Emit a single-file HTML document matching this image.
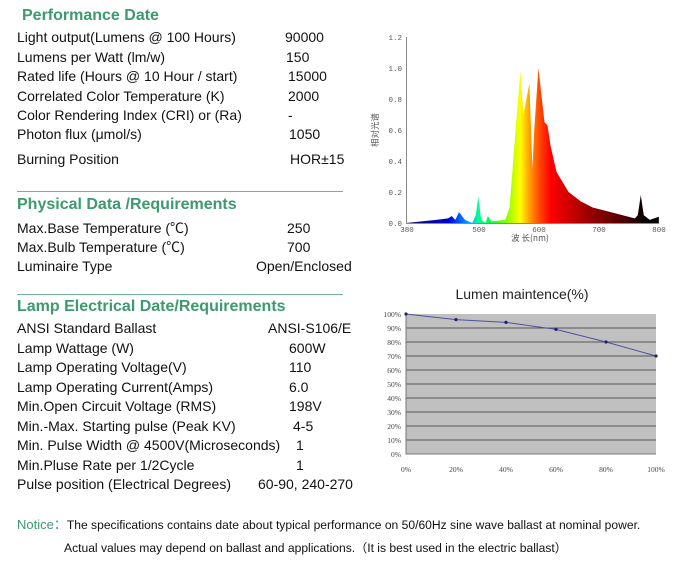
<!DOCTYPE html>
<html><head><meta charset="utf-8"><style>
body{margin:0;width:676px;height:562px;background:#fff;position:relative;overflow:hidden;font-family:"Liberation Sans","Noto Sans CJK SC",sans-serif;color:#111}
.t{position:absolute;font-size:14px;white-space:nowrap;line-height:16px}
.h{position:absolute;font-size:16px;font-weight:bold;color:#3c9a6e;white-space:nowrap;line-height:18px}
.ln{position:absolute;left:17px;width:326px;height:1px;background:#6fb594}
.n{position:absolute;font-size:12.1px;white-space:nowrap;line-height:14px}
</style></head><body>
<div class="h" style="left:22px;top:7px">Performance Date</div>
<div class="t" style="left:17px;top:29px">Light output(Lumens @ 100 Hours)</div><div class="t" style="left:285px;top:29px">90000</div>
<div class="t" style="left:17px;top:49px">Lumens per Watt (lm/w)</div><div class="t" style="left:286px;top:49px">150</div>
<div class="t" style="left:17px;top:68px">Rated life (Hours @ 10 Hour / start)</div><div class="t" style="left:288px;top:68px">15000</div>
<div class="t" style="left:17px;top:88px">Correlated Color Temperature (K)</div><div class="t" style="left:288px;top:88px">2000</div>
<div class="t" style="left:17px;top:107px">Color Rendering Index (CRI) or (Ra)</div><div class="t" style="left:288px;top:107px">-</div>
<div class="t" style="left:17px;top:126px">Photon flux (μmol/s)</div><div class="t" style="left:289px;top:126px">1050</div>
<div class="t" style="left:17px;top:151px">Burning Position</div><div class="t" style="left:290px;top:151px">HOR±15</div>
<div class="ln" style="top:191px"></div>
<div class="h" style="left:17px;top:196px">Physical Data /Requirements</div>
<div class="t" style="left:17px;top:220px">Max.Base Temperature (℃)</div><div class="t" style="left:287px;top:220px">250</div>
<div class="t" style="left:17px;top:239px">Max.Bulb Temperature (℃)</div><div class="t" style="left:287px;top:239px">700</div>
<div class="t" style="left:17px;top:258px">Luminaire Type</div><div class="t" style="left:256px;top:258px">Open/Enclosed</div>
<div class="ln" style="top:294px"></div>
<div class="h" style="left:17px;top:298px">Lamp Electrical Date/Requirements</div>
<div class="t" style="left:17px;top:320px">ANSI Standard Ballast</div><div class="t" style="left:268px;top:320px">ANSI-S106/E</div>
<div class="t" style="left:17px;top:340px">Lamp Wattage (W)</div><div class="t" style="left:289px;top:340px">600W</div>
<div class="t" style="left:17px;top:359px">Lamp Operating Voltage(V)</div><div class="t" style="left:289px;top:359px">110</div>
<div class="t" style="left:17px;top:379px">Lamp Operating Current(Amps)</div><div class="t" style="left:289px;top:379px">6.0</div>
<div class="t" style="left:17px;top:398px">Min.Open Circuit Voltage (RMS)</div><div class="t" style="left:289px;top:398px">198V</div>
<div class="t" style="left:17px;top:418px">Min.-Max. Starting pulse (Peak KV)</div><div class="t" style="left:293px;top:418px">4-5</div>
<div class="t" style="left:17px;top:437px">Min. Pulse Width @ 4500V(Microseconds)</div><div class="t" style="left:296px;top:437px">1</div>
<div class="t" style="left:17px;top:457px">Min.Pluse Rate per 1/2Cycle</div><div class="t" style="left:296px;top:457px">1</div>
<div class="t" style="left:17px;top:476px">Pulse position (Electrical Degrees)</div><div class="t" style="left:258px;top:476px">60-90, 240-270</div>
<div class="n" style="left:17px;top:518px"><span style="color:#3c9a6e;font-size:13px">Notice：</span>The specifications contains date about typical performance on 50/60Hz sine wave ballast at nominal power.</div>
<div class="n" style="left:64px;top:541px">Actual values may depend on ballast and applications.（It is best used in the electric ballast）</div>

<svg style="position:absolute;left:0;top:0" width="676" height="562">
<defs><linearGradient id="sp" gradientUnits="userSpaceOnUse" x1="380" y1="0" x2="800" y2="0">
<stop offset="0" stop-color="#101060"/><stop offset="0.167" stop-color="#0000d0"/><stop offset="0.214" stop-color="#0060ff"/><stop offset="0.262" stop-color="#00c0ff"/><stop offset="0.286" stop-color="#00ff90"/><stop offset="0.333" stop-color="#00ff40"/><stop offset="0.393" stop-color="#80ff00"/><stop offset="0.452" stop-color="#ffff00"/><stop offset="0.488" stop-color="#ffa000"/><stop offset="0.524" stop-color="#ff5000"/><stop offset="0.571" stop-color="#ff0000"/><stop offset="0.714" stop-color="#a00000"/><stop offset="0.857" stop-color="#500000"/><stop offset="0.952" stop-color="#000"/><stop offset="1" stop-color="#000"/></linearGradient></defs>
<g transform="translate(406,223) scale(0.602,-155) translate(-380,0)">
<path fill="url(#sp)" d="M380 0 L430 0.02 L450 0.03 L456 0.045 L462 0.02 L468 0.07 L478 0.02 L490 0 L496 0.05 L500 0.17 L505 0.02 L512 0 L516 0.045 L522 0.01 L545 0.02 L552 0.1 L560 0.5 L570 0.98 L575 0.7 L585 0.9 L590 0.35 L593 0.6 L600 1.0 L610 0.65 L615 0.63 L620 0.5 L630 0.33 L650 0.2 L670 0.14 L690 0.1 L720 0.07 L760 0.03 L765 0.05 L770 0.18 L775 0.05 L785 0.02 L800 0.04 L800 0 Z"/>
</g>
<g stroke="#888" stroke-width="1" fill="none"><path d="M406.5 37V223.5H659"/></g>
<g font-family="Liberation Mono,monospace" font-size="7.5" fill="#555" text-anchor="end">
<text x="402" y="40">1.2</text><text x="402" y="71">1.0</text><text x="402" y="102">0.8</text><text x="402" y="133">0.6</text><text x="402" y="164">0.4</text><text x="402" y="195">0.2</text><text x="402" y="226">0.0</text></g>
<g font-family="Liberation Mono,monospace" font-size="7.5" fill="#555" text-anchor="middle">
<text x="407" y="232">380</text><text x="479" y="232">500</text><text x="539" y="232">600</text><text x="599" y="232">700</text><text x="659" y="232">800</text>
<text x="530" y="241" font-family="Noto Sans CJK SC,sans-serif" font-size="8.5">波 长(nm)</text></g>
<text transform="translate(378,130) rotate(-90)" text-anchor="middle" font-family="Noto Sans CJK SC,sans-serif" font-size="8.5" fill="#555">相对光谱</text>

<text x="522" y="299" text-anchor="middle" font-size="14" fill="#222" font-family="Liberation Sans,sans-serif">Lumen maintence(%)</text>
<rect x="406" y="314" width="250" height="140" fill="#c0c0c0"/>
<g stroke="#333" stroke-width="0.8">
<path d="M406 328H656M406 342H656M406 356H656M406 370H656M406 384H656M406 398H656M406 412H656M406 426H656M406 440H656"/></g>
<path d="M406 314V454H656" stroke="#777" fill="none"/>
<polyline points="406,314 456,319.6 506,322.4 556,329.4 606,342 656,356" fill="none" stroke="#5050a0" stroke-width="1"/>
<g fill="#202070"><circle cx="406" cy="314" r="1.6"/><circle cx="456" cy="319.6" r="1.6"/><circle cx="506" cy="322.4" r="1.6"/><circle cx="556" cy="329.4" r="1.6"/><circle cx="606" cy="342" r="1.6"/><circle cx="656" cy="356" r="1.6"/></g>
<g font-family="Liberation Serif,serif" font-size="7.5" fill="#444" text-anchor="end">
<text x="401" y="317">100%</text><text x="401" y="331">90%</text><text x="401" y="345">80%</text><text x="401" y="359">70%</text><text x="401" y="373">60%</text><text x="401" y="387">50%</text><text x="401" y="401">40%</text><text x="401" y="415">30%</text><text x="401" y="429">20%</text><text x="401" y="443">10%</text><text x="401" y="457">0%</text></g>
<g font-family="Liberation Serif,serif" font-size="7.5" fill="#444" text-anchor="middle">
<text x="406" y="472">0%</text><text x="456" y="472">20%</text><text x="506" y="472">40%</text><text x="556" y="472">60%</text><text x="606" y="472">80%</text><text x="656" y="472">100%</text></g>
</svg>
</body></html>
